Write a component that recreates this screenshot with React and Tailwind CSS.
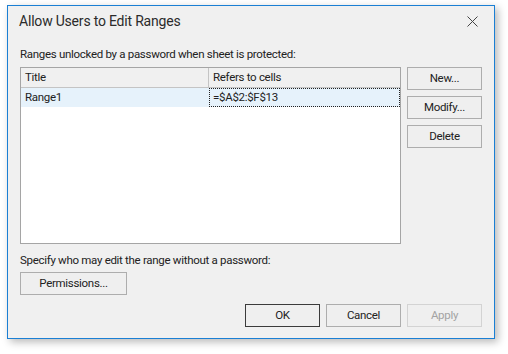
import React from "react";

const font = { fontFamily: 'Roboto, "Noto Sans", sans-serif' };
const titleFont = { fontFamily: '"Liberation Sans Narrow", Roboto, sans-serif' };

function Btn({ children, className = "", disabled = false, def = false }) {
  return (
    <div
      className={
        "flex h-[23px] w-[75px] items-center justify-center border bg-[#efefef] text-[11.5px] leading-none tracking-[-0.3px] " +
        (disabled
          ? "border-[#d3d3d3] text-[#a3a3a3] "
          : def
          ? "border-[#3b3b3b] text-[#222] "
          : "border-[#adadad] text-[#222] ") +
        className
      }
    >
      {children}
    </div>
  );
}

export default function App() {
  return (
    <div className="h-[354px] w-[508px] bg-white pl-[7px] pt-[5px]" style={font}>
      <div className="flex h-[334px] w-[488px] flex-col border border-[#1a7fd4] bg-[#f0f0f0] shadow-[3px_3px_8px_rgba(0,0,0,0.28)]">
        <div className="flex h-[31px] items-center justify-between pl-[11px] pr-[16px]">
          <span className="text-[14px] tracking-[-0.2px] text-[#2b2b2b]" style={titleFont}>Allow Users to Edit Ranges</span>
          <svg width="11" height="11" viewBox="0 0 11 11">
            <path d="M0.5 0.5 L10.5 10.5 M10.5 0.5 L0.5 10.5" stroke="#444" strokeWidth="1" />
          </svg>
        </div>
        <div className="flex flex-col px-[12px] pt-[9px] tracking-[-0.3px]">
          <div className="h-[16px] text-[11.5px] leading-[16px] text-[#222]">
            Ranges unlocked by a password when sheet is protected:
          </div>
          <div className="mt-[5px] flex gap-[6px]">
            <div className="flex h-[177px] w-[381px] flex-col border border-[#a5a5a5] bg-white">
              <div className="flex h-[20px] border-b border-[#c4c4c4] bg-[#f0f0f0] text-[11.5px] leading-[19px] text-[#222]">
                <div className="w-[188px] border-r border-[#c4c4c4] pl-[4px]">Title</div>
                <div className="flex-1 pl-[4px]">Refers to cells</div>
              </div>
              <div className="flex h-[19px] bg-[#e6f2fb] text-[11.5px] leading-[17px] text-[#222]">
                <div className="w-[188px] pl-[4px] pt-[1px]">Range1</div>
                <div className="flex-1 border border-dotted border-[#222] pl-[3px]">=$A$2:$F$13</div>
              </div>
            </div>
            <div className="flex flex-col gap-[6px]">
              <Btn>New...</Btn>
              <Btn>Modify...</Btn>
              <Btn>Delete</Btn>
            </div>
          </div>
          <div className="mt-[8px] h-[16px] text-[11.5px] leading-[16px] text-[#222]">
            Specify who may edit the range without a password:
          </div>
          <Btn className="mt-[4px] w-[107px]">Permissions...</Btn>
          <div className="mt-[9px] flex justify-end gap-[6px]">
            <Btn def>OK</Btn>
            <Btn>Cancel</Btn>
            <Btn disabled>Apply</Btn>
          </div>
        </div>
      </div>
    </div>
  );
}
